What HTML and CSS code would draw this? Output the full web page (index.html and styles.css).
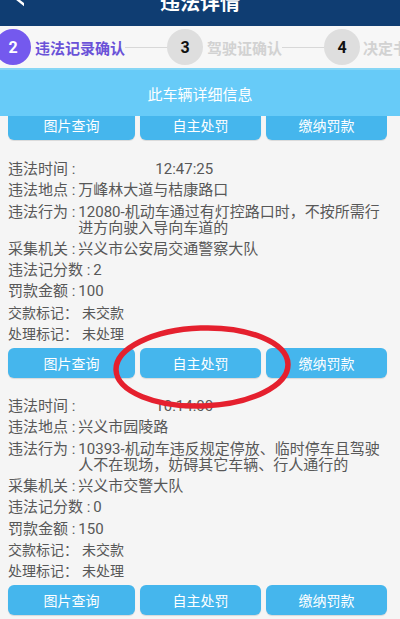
FILE: index.html
```html
<!DOCTYPE html>
<html lang="zh-CN">
<head>
<meta charset="utf-8">
<title>违法详情</title>
<link rel="stylesheet" href="styles.css">
</head>
<body>
<div class="page">
  <header class="topbar">
    <svg class="back" width="24" height="26" viewBox="0 0 24 26"><polyline points="26,-16 13,-4 27,7" fill="none" stroke="#fff" stroke-width="2.4" stroke-linecap="round"/></svg>
    <div class="title">违法详情</div>
    <div class="exit">退出系统</div>
  </header>

  <div class="steps">
    <div class="circle active">2</div>
    <div class="step-label active">违法记录确认</div>
    <div class="step-line"></div>
    <div class="circle">3</div>
    <div class="step-label">驾驶证确认</div>
    <div class="step-line"></div>
    <div class="circle">4</div>
    <div class="step-label last">决定书</div>
  </div>

  <div class="banner">此车辆详细信息</div>

  <div class="btnrow clipped">
    <div class="btn">图片查询</div>
    <div class="btn">自主处罚</div>
    <div class="btn">缴纳罚款</div>
  </div>

  <section class="record">
    <div class="row"><span class="label">违法时间 :</span><span class="value time">12:47:25</span></div>
    <div class="row"><span class="label">违法地点 :</span><span class="value">万峰林大道与桔康路口</span></div>
    <div class="row"><span class="label">违法行为 :</span><span class="value">12080-机动车通过有灯控路口时，不按所需行进方向驶入导向车道的</span></div>
    <div class="row"><span class="label">采集机关 :</span><span class="value">兴义市公安局交通警察大队</span></div>
    <div class="row"><span class="label">违法记分数 :</span><span class="value">2</span></div>
    <div class="row"><span class="label">罚款金额 :</span><span class="value">100</span></div>
    <div class="row small"><span class="label">交款标记：</span><span class="value">未交款</span></div>
    <div class="row small"><span class="label">处理标记：</span><span class="value">未处理</span></div>
    <div class="btnrow">
      <div class="btn">图片查询</div>
      <div class="btn">自主处罚</div>
      <div class="btn">缴纳罚款</div>
    </div>
  </section>

  <section class="record">
    <div class="row"><span class="label">违法时间 :</span><span class="value time">10:14:00</span></div>
    <div class="row"><span class="label">违法地点 :</span><span class="value">兴义市园陵路</span></div>
    <div class="row"><span class="label">违法行为 :</span><span class="value">10393-机动车违反规定停放、临时停车且驾驶人不在现场，妨碍其它车辆、行人通行的</span></div>
    <div class="row"><span class="label">采集机关 :</span><span class="value">兴义市交警大队</span></div>
    <div class="row"><span class="label">违法记分数 :</span><span class="value">0</span></div>
    <div class="row"><span class="label">罚款金额 :</span><span class="value">150</span></div>
    <div class="row small"><span class="label">交款标记：</span><span class="value">未交款</span></div>
    <div class="row small"><span class="label">处理标记：</span><span class="value">未处理</span></div>
    <div class="btnrow">
      <div class="btn">图片查询</div>
      <div class="btn">自主处罚</div>
      <div class="btn">缴纳罚款</div>
    </div>
  </section>

  <svg class="mark" width="190" height="96" viewBox="0 0 190 96">
    <ellipse cx="94" cy="47" rx="86" ry="39" fill="none" stroke="#e5202e" stroke-width="5.5" transform="rotate(-2 94 47)"/>
  </svg>
</div>
</body>
</html>
```

FILE: styles.css
```css
html, body {
  margin: 0;
  padding: 0;
  background: #f5f5f5;
}
body {
  width: 400px;
  height: 619px;
  overflow: hidden;
  font-family: Roboto, "Noto Sans CJK SC", sans-serif;
}
.page {
  position: relative;
  width: 400px;
  height: 619px;
  overflow: hidden;
}
.topbar {
  height: 26px;
  background: #0f3d72;
  position: relative;
  overflow: hidden;
  display: flex;
  justify-content: center;
}
.back {
  position: absolute;
  left: 0;
  top: 0;
}
.title {
  color: #fff;
  font-weight: bold;
  font-size: 20px;
  line-height: 20px;
  margin-top: -7px;
  height: 20px;
}
.exit {
  position: absolute;
  right: 10px;
  top: -14px;
  color: #d9283e;
  font-size: 15px;
  line-height: 15px;
  font-weight: bold;
}
.steps {
  height: 42px;
  background: #f7f7f7;
  display: flex;
  align-items: center;
  margin-left: -5px;
  white-space: nowrap;
  overflow: hidden;
}
.circle {
  flex: 0 0 36px;
  width: 36px;
  height: 36px;
  border-radius: 50%;
  background: #dedede;
  color: #111;
  font-weight: bold;
  font-size: 16px;
  display: flex;
  align-items: center;
  justify-content: center;
}
.circle.active {
  background: #7459ee;
  color: #fff;
}
.step-label {
  font-size: 15px;
  font-weight: bold;
  color: #d2d2d2;
  margin: 0 0 0 4px;
  flex: 0 0 auto;
}
.step-label.active {
  color: #6a52d8;
}
.step-label.last {
  margin-left: 3px;
}
.step-line {
  flex: 0 0 42px;
  height: 1px;
  background: #d8d8d8;
}
.banner {
  height: 48px;
  background: #67cbf8;
  border-top: 2px solid #86d6f5;
  box-sizing: border-box;
  color: #fff;
  font-size: 15px;
  display: flex;
  align-items: center;
  justify-content: center;
  position: relative;
  z-index: 2;
}
.btnrow {
  display: flex;
  gap: 5px;
  margin: 0 13px 0 8px;
}
.btnrow.clipped {
  height: 24px;
  align-items: flex-end;
  overflow: hidden;
  padding-bottom: 1px;
}
.btn {
  flex: 1 1 0;
  height: 30px;
  flex-shrink: 0;
  border-radius: 6px;
  background: #45b6ed;
  color: #fff;
  font-size: 14px;
  display: flex;
  align-items: center;
  justify-content: center;
  box-shadow: 0 1px 1px rgba(0, 0, 0, 0.12);
}
.btn:first-child {
  flex-grow: 1.05;
}
.record {
  padding: 20px 8px 0 8px;
}
.record .btnrow {
  margin: 6px 5px 0 0;
}
.row {
  display: flex;
  font-size: 15px;
  line-height: 16px;
  color: #585858;
  margin-bottom: 5.3px;
}
.row.small {
  font-size: 14px;
}
.label {
  flex: 0 0 auto;
  white-space: nowrap;
}
.value {
  flex: 1 1 auto;
  margin-left: 3px;
}
.row.small .value {
  margin-left: 4px;
}
.value.time {
  margin-left: 80px;
}
.mark {
  position: absolute;
  left: 108px;
  top: 320px;
  z-index: 5;
}
```
